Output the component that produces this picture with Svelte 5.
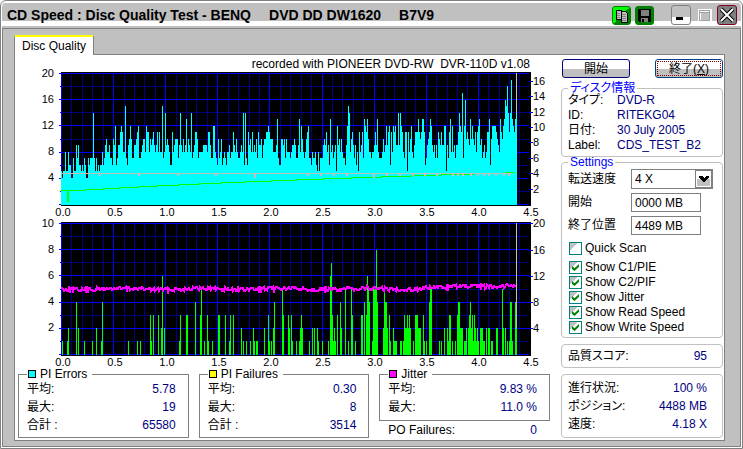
<script lang="ts">
	type Row = { label: string; value: string };
	type Stat = { title: string; color: string; rows: Row[] };

	const stats: Stat[] = [
		{
			title: 'PI Errors',
			color: '#00ffff',
			rows: [
				{ label: '平均:', value: '5.78' },
				{ label: '最大:', value: '19' },
				{ label: '合計 :', value: '65580' }
			]
		},
		{
			title: 'PI Failures',
			color: '#ffff00',
			rows: [
				{ label: '平均:', value: '0.30' },
				{ label: '最大:', value: '8' },
				{ label: '合計 :', value: '3514' }
			]
		},
		{
			title: 'Jitter',
			color: '#ff00ff',
			rows: [
				{ label: '平均:', value: '9.83 %' },
				{ label: '最大:', value: '11.0 %' }
			]
		}
	];

	const discInfo: Row[] = [
		{ label: 'タイプ:', value: 'DVD-R' },
		{ label: 'ID:', value: 'RITEKG04' },
		{ label: '日付:', value: '30 July 2005' },
		{ label: 'Label:', value: 'CDS_TEST_B2' }
	];

	const progress: Row[] = [
		{ label: '進行状況:', value: '100 %' },
		{ label: 'ポジション:', value: '4488 MB' },
		{ label: '速度:', value: '4.18 X' }
	];

	let speed = $state('4 X');
	let start = $state('0000 MB');
	let end = $state('4489 MB');
	let quickScan = $state(false);
	let shows = $state([
		{ label: 'Show C1/PIE', on: true },
		{ label: 'Show C2/PIF', on: true },
		{ label: 'Show Jitter', on: true },
		{ label: 'Show Read Speed', on: true },
		{ label: 'Show Write Speed', on: true }
	]);

	// Plot area size and the y of the zero line
	const W = 470;
	const H = 134;
	const ZERO = 132;

	// PI errors, one base-36 digit per column, one line per 0.5 GB
	const pie = `
		5455 8558 6644 7559 7966 5657 6447 6777 e757 5656 6867 9a88 9776
		a9c6 799b cb88 f769 aca7 799a bc77 89aa 8cbb 8a9a b989 b8b8 8f78
		e9a9 866b 89aa a79e 98a8 9d8a 98e7 89bb a788 8899 998b b977 cc87
		6a78 a678 7688 9788 b98a 8778 98e6 e76b 9a8b 898a 7b99 a79a abbc
		baaa 8889 d766 aa9a 7a88 8789 9a97 79d8 ca87 8abc 7768 7786 5857
		779a 9b89 6d89 7895 c9a8 a877 69cf e8ab 9796 85b8 9b7d cbda 8878
		89b9 d877 78a8 9c9b c6b8 cbc9 9e9e cb87 bb5b 8ac8 79bb bdba bddb
		679a bdc9 8979 7ba9 b99c c597 bd8c 8979 9bec bh7c gaba 9dac a9b8
		bcd9 a789 78bb d6ac cccb a98d bacd gfie bejd cbde
	`.replace(/\s/g, '');

	// PI failures as column:value
	const pif = `
		1:1 6:1 7:2 15:4 17:2 23:1 31:1 35:2 40:1 41:4 67:1 76:1 79:1 89:3 90:1 92:3 97:3 100:2
		101:6 103:2 118:1 119:3 125:3 126:3 134:4 139:3 140:5 143:1 146:3 147:1 151:1 157:3 158:3
		164:3 168:1 169:3 172:3 180:2 182:1 185:1 189:1 192:2 193:1 195:1 196:1 203:2 207:3 208:1
		210:1 212:2 213:4 221:5 222:3 227:3 228:2 230:3 231:1 235:1 238:1 239:2 240:3 241:2 248:1
		251:2 253:2 256:2 257:1 261:1 267:1 269:6 270:7 271:3 272:1 273:2 274:1 276:3 279:4 280:2
		284:5 287:1 290:5 291:3 294:1 300:3 301:3 303:4 305:3 306:6 307:5 308:4 311:1 312:5 313:5
		314:5 315:8 316:4 322:2 323:5 324:4 325:4 326:2 328:3 329:1 332:2 333:1 334:1 335:1 339:1
		340:1 342:1 343:3 344:2 345:2 346:3 347:2 348:3 349:2 352:1 354:3 355:3 356:3 357:2 358:2
		359:2 362:3 363:1 365:1 368:4 369:5 370:5 378:1 380:1 383:2 386:2 387:1 388:3 389:3 391:1
		394:1 396:3 397:4 398:4 399:2 400:2 401:2 403:1 404:1 405:2 407:2 408:3 409:4 410:2 411:3
		412:1 413:3 414:2 415:1 416:2 417:1 419:2 420:2 421:2 422:1 423:1 425:2 427:2 428:2 430:1
		431:1 435:2 436:2 441:5 442:2 444:2 446:1 448:1 449:4 450:4 451:1 454:4 455:2
	`;

	function bar(x: number, height: number) {
		const h = Math.round(height);
		return `M${x} ${ZERO + 1}v${-h - 1}h1v${h + 1}z`;
	}

	const piePath = [...pie].map((c, i) => bar(i, parseInt(c, 36) * 6.53)).join('');
	const pifPath = pif
		.trim()
		.split(/\s+/)
		.map((p) => p.split(':').map(Number))
		.map(([x, v]) => bar(x, v * 13.06))
		.join('');

	const readPath =
		'M0 118H6V129H7V118H24V117H42V116H58V115H77V114H96V113H117V112H138V111H160V110H184V109H210V108H235V107H262V106H290V105H320V104H350V103H380V102H412V101H444V100H454';

	const dips = [38, 77, 116, 154, 193, 246, 259, 272, 285, 312, 325, 338, 351, 363, 375, 391, 396, 401, 409, 416, 422, 427, 434, 442, 447];

	function jitter() {
		let seed = 7;
		let d = '';
		for (let x = 0; x <= 455; x++) {
			seed = (seed * 1103515245 + 12345) % 2147483648;
			const noise = (seed / 2147483648 - 0.5) * 4;
			const rise = x > 340 ? (x - 340) / 30 : 0;
			const wave = Math.sin(x / 13) * 0.6;
			d += `${x ? 'L' : 'M'}${x} ${Math.round(67 + noise + wave - rise)}`;
		}
		return d;
	}
	const jitterPath = jitter();

	const columns = Array.from({ length: 45 }, (_, i) => i);
	const lines = Array.from({ length: 11 }, (_, i) => i);
	const gigabytes = ['0.0', '0.5', '1.0', '1.5', '2.0', '2.5', '3.0', '3.5', '4.0', '4.5'];
</script>

{#snippet grid(left: number[], right: number[], rightStep: number)}
	<rect width={W} height={H} fill="#000" />
	{#each columns as i}
		<rect x={Math.round(i * 10.42)} y="1" width="1" height={ZERO} fill={i % 5 ? '#000080' : '#0000ff'} />
	{/each}
	{#each lines as i}
		<rect x="-1" y={Math.round(1 + i * 13.1)} width={W - 1} height="1" fill={i % 2 ? '#000080' : '#0000ff'} />
		<rect x={i % 2 ? -1 : -2} y={Math.round(1 + i * 13.1)} width="2" height="1" fill="#0000ff" />
	{/each}
	{#each left as v, i}
		<text x="-7" y={5 + i * 26} text-anchor="end">{v}</text>
	{/each}
	{#each right as v}
		<rect x={W - 2} y={Math.round(ZERO - v * rightStep)} width="4" height="1" fill="#0000ff" />
		<text x={W + 2} y={Math.round(ZERO + 4 - v * rightStep)}>{v}</text>
	{/each}
	{#each gigabytes as v, i}
		<text x={2 + i * 52} y="144" text-anchor="middle">{v}</text>
	{/each}
{/snippet}

<main class="window">
	<header class="title-bar">
		<h1>
			<span>CD Speed : Disc Quality Test - BENQ</span>
			<span>DVD DD DW1620</span>
			<span>B7V9</span>
		</h1>
		<div class="tools">
			<button class="tool copy" aria-label="Copy">
				<svg width="17" height="17" viewBox="0 0 17 17" shape-rendering="crispEdges">
					<path d="M3 3h5v9h-5z" fill="#c0c0c0" stroke="#000" />
					<path d="M8 4h4l2 2v9H8z" fill="#c0c0c0" stroke="#000" />
					<path d="M9 7h4M9 9h4M9 11h4M9 13h4M4 6h3M4 8h3M4 10h3" stroke="#808080" />
				</svg>
			</button>
			<button class="tool save" aria-label="Save">
				<svg width="17" height="17" viewBox="0 0 17 17" shape-rendering="crispEdges">
					<path d="M2 2h13v13H3l-1-1z" fill="#000" />
					<path d="M5 3h8v6H5z" fill="#808080" />
					<path d="M5 11h7v4H5z" fill="#808080" />
					<path d="M6 12h2v3H6z" fill="#000" />
				</svg>
			</button>
		</div>
		<div class="controls">
			<button class="control min" aria-label="Minimize">
				<svg width="18" height="18" viewBox="0 0 18 18"><path d="M4 11h7v3H4z" fill="#000" /></svg>
			</button>
			<button class="control max" aria-label="Maximize" disabled>
				<svg width="18" height="18" viewBox="0 0 18 18" shape-rendering="crispEdges">
					<path d="M4 4h11v11H4z" fill="none" stroke="#fff" stroke-width="3" />
					<path d="M4 4h10v10H4zM4 6h10" fill="none" stroke="#a0a0a0" />
				</svg>
			</button>
			<button class="control close" aria-label="Close">
				<svg width="18" height="18" viewBox="0 0 18 18">
					<path d="M3 3L15 15M15 3L3 15" stroke="#000" stroke-width="4" />
					<path d="M3 3L15 15M15 3L3 15" stroke="#fff" stroke-width="2" />
				</svg>
			</button>
		</div>
	</header>

	<div class="body">
		<button class="tab">Disc Quality</button>

		<div class="panel">
			<div class="left">
				<svg class="chart" viewBox="0 0 532 164">
					<text class="caption" x="512" y="13" text-anchor="end">recorded with PIONEER DVD-RW&nbsp; DVR-110D v1.08</text>
					<g transform="translate(43 17)">
						{@render grid([20, 16, 12, 8, 4], [16, 14, 12, 10, 8, 6, 4, 2], 7.7)}
						<path d={piePath} fill="#00ffff" shape-rendering="crispEdges" />
						<path d="M455 1h1v40h-1z" fill="#c0c0c0" />
						<path d={readPath} fill="none" stroke="#00ff00" shape-rendering="crispEdges" />
						<rect y="101" width="452" height="1" fill="#c0c0c0" />
						{#each dips as x}
							<rect {x} y="102" width="2" height={x === 193 || x === 312 ? 4 : 2} fill="#c0c0c0" />
						{/each}
					</g>
				</svg>
				<svg class="chart" viewBox="0 0 532 149">
					<g transform="translate(43 3)">
						{@render grid([10, 8, 6, 4, 2], [20, 16, 12, 8, 4], 6.53)}
						<path d={pifPath} fill="#00ff00" shape-rendering="crispEdges" />
						<path d="M455 1h1v105h-1z" fill="#c0c0c0" />
						<path d={jitterPath} fill="none" stroke="#ff00ff" stroke-width="2" shape-rendering="crispEdges" />
					</g>
				</svg>

				<div class="stats">
					{#each stats as stat, i}
						<div class="stat">
							<fieldset>
								<legend><i style="background: {stat.color}"></i>{stat.title}</legend>
								{#each stat.rows as row}
									<div class="row"><span>{row.label}</span><output>{row.value}</output></div>
								{/each}
							</fieldset>
							{#if i === 2}
								<div class="row failures"><span>PO Failures:</span><output>0</output></div>
							{/if}
						</div>
					{/each}
				</div>
			</div>

			<div class="right">
				<div class="buttons">
					<button class="push">開始</button>
					<button class="push focused">終了(<u>X</u>)</button>
				</div>

				<fieldset class="group info">
					<legend>ディスク情報</legend>
					{#each discInfo as row}
						<div><span>{row.label}</span><output>{row.value}</output></div>
					{/each}
				</fieldset>

				<fieldset class="group settings">
					<legend>Settings</legend>
					<div class="field">
						<label for="speed">転送速度</label>
						<div class="select">
							<select id="speed" bind:value={speed}>
								<option>4 X</option>
								<option>8 X</option>
							</select>
							<svg width="17" height="18" viewBox="0 0 17 18" shape-rendering="crispEdges">
								<rect x="0.5" y="0.5" width="16" height="17" fill="#fff" stroke="#808080" />
								<path d="M2 9h13v7H2z" fill="#c0c0c0" />
								<path d="M4 6h3l2 2 2-2h3v2l-5 4-5-4z" fill="#000" />
							</svg>
						</div>
					</div>
					<div class="field">
						<label for="start">開始</label>
						<input id="start" type="text" bind:value={start} />
					</div>
					<div class="field">
						<label for="end">終了位置</label>
						<input id="end" type="text" bind:value={end} />
					</div>
					<label class="check quick">
						<input type="checkbox" bind:checked={quickScan} />Quick Scan
					</label>
					{#each shows as show}
						<label class="check"><input type="checkbox" bind:checked={show.on} />{show.label}</label>
					{/each}
				</fieldset>

				<div class="group box score">
					<div class="row"><span>品質スコア:</span><output>95</output></div>
				</div>

				<div class="group box">
					{#each progress as row}
						<div class="row"><span>{row.label}</span><output>{row.value}</output></div>
					{/each}
				</div>
			</div>
		</div>
	</div>
</main>

<style>
	.window {
		padding: 1px;
		border: 1px solid #808080;
		border-radius: 6px 6px 0 0;
		background: #fff;
		color: #000;
		font: 12px/15px 'Liberation Sans', 'Noto Sans CJK JP', sans-serif;
		font-feature-settings: 'palt';
	}

	button,
	input,
	select {
		margin: 0;
		font: inherit;
		color: inherit;
	}

	.title-bar {
		display: flex;
		align-items: center;
		height: 26px;
		padding: 0 4px 0 5px;
		border-radius: 5px 5px 0 0;
		box-sizing: border-box;
		background: linear-gradient(#fff 1px, #c0c0c0 1px 19px, #fff 19px 24px, #c0c0c0 24px);
	}

	h1 {
		display: flex;
		flex: 1;
		gap: 18px;
		margin: 0;
		font-size: 14px;
		white-space: nowrap;
	}

	.tools,
	.controls {
		display: flex;
		gap: 4px;
	}

	.controls {
		margin-left: 17px;
		gap: 3px;
	}

	.tool,
	.control {
		display: flex;
		align-items: center;
		justify-content: center;
		width: 19px;
		height: 19px;
		padding: 0;
		border: 1px solid #008000;
		border-radius: 3px;
	}

	.copy {
		background: linear-gradient(135deg, #00ff00 50%, #008000 50%);
	}

	.save {
		background: #008000;
	}

	.control {
		width: 20px;
		height: 20px;
		border-color: #808080;
		background: linear-gradient(#c0c0c0 60%, #fff 60%);
	}

	.max {
		border-color: transparent;
		background: none;
	}

	.close {
		border-color: #800020;
		background: #808080;
	}

	.body {
		padding: 6px 15px 5px 11px;
		border: 1px solid #808080;
		background: #c0c0c0;
	}

	.tab {
		display: block;
		position: relative;
		height: 20px;
		margin-bottom: -1px;
		padding: 0 7px;
		border: 1px solid #808080;
		border-top: 2px solid #ffff00;
		border-bottom: 0;
		border-radius: 2px 2px 0 0;
		background: #fff;
	}

	.panel {
		display: flex;
		gap: 11px;
		padding: 0 1px 1px 3px;
		border: 1px solid #808080;
		background: #fff;
	}

	.left {
		flex: 1;
		min-width: 0;
	}

	.chart {
		display: block;
		width: 100%;
		overflow: visible;
		font-size: 11px;
	}

	.caption {
		font-size: 12px;
	}

	fieldset {
		min-width: 0;
		margin: 0;
		padding: 0 12px 3px 8px;
		border: 1px solid #808080;
	}

	legend {
		padding: 0 5px 0 1px;
		line-height: 12px;
	}

	legend i {
		display: inline-block;
		width: 6px;
		height: 6px;
		margin-right: 4px;
		border: 1px solid #000;
	}

	.stats {
		display: grid;
		grid-template-columns: repeat(3, 1fr);
		gap: 10px;
	}

	.row {
		display: flex;
		justify-content: space-between;
		line-height: 18px;
	}

	.stat:last-child fieldset {
		padding-bottom: 4px;
	}

	.failures {
		padding: 0 13px 0 9px;
	}

	output {
		color: #000080;
	}

	.right {
		display: flex;
		flex-direction: column;
		width: 162px;
		padding-top: 4px;
	}

	.buttons {
		display: flex;
		justify-content: space-between;
		margin: 0 0 5px 1px;
	}

	.push {
		width: 68px;
		height: 19px;
		padding: 0;
		border: 1px solid #000080;
		border-radius: 3px;
		background: linear-gradient(#fff 55%, #c0c0c0 55%);
		line-height: 16px;
	}

	.focused {
		outline: 1px dotted #800000;
		outline-offset: -3px;
		border-color: #004080;
	}

	.group {
		padding: 0 9px 3px 6px;
		border: 1px solid #c0c0c0;
		border-radius: 4px;
	}

	.group legend {
		padding: 0 2px;
		line-height: 10px;
		color: #0000ff;
	}

	.info div {
		display: grid;
		grid-template-columns: 49px 1fr;
	}

	.settings {
		padding: 2px 9px 2px 6px;
	}

	.field {
		display: grid;
		grid-template-columns: 63px 1fr;
		align-items: center;
		margin-bottom: 4px;
	}

	.field input,
	.field select {
		box-sizing: border-box;
		width: 70px;
		height: 19px;
		padding: 0 3px;
		border: 1px solid #808080;
		border-radius: 0;
		background: #fff;
	}

	.select {
		position: relative;
		width: 82px;
	}

	.field select {
		display: block;
		width: 100%;
		height: 20px;
		appearance: none;
	}

	.select svg {
		position: absolute;
		top: 1px;
		right: 1px;
		pointer-events: none;
	}

	.check {
		display: flex;
		align-items: center;
		gap: 3px;
		padding-left: 1px;
	}

	.quick {
		margin: 6px 0 4px;
	}

	.check input {
		display: grid;
		flex: none;
		place-content: center;
		box-sizing: border-box;
		width: 13px;
		height: 13px;
		border: 1px solid #008080;
		border-radius: 0;
		background: linear-gradient(135deg, #c0c0c0 35%, #fff 35%);
		appearance: none;
	}

	.check input:checked::after {
		content: '';
		width: 7px;
		height: 7px;
		background: #008000;
		clip-path: polygon(0 30%, 36% 62%, 100% 0, 100% 40%, 36% 100%, 0 70%);
	}

	.box {
		margin-top: 6px;
		padding: 4px 15px 4px 6px;
	}

	.score {
		padding-top: 2px;
		padding-bottom: 2px;
	}
</style>
